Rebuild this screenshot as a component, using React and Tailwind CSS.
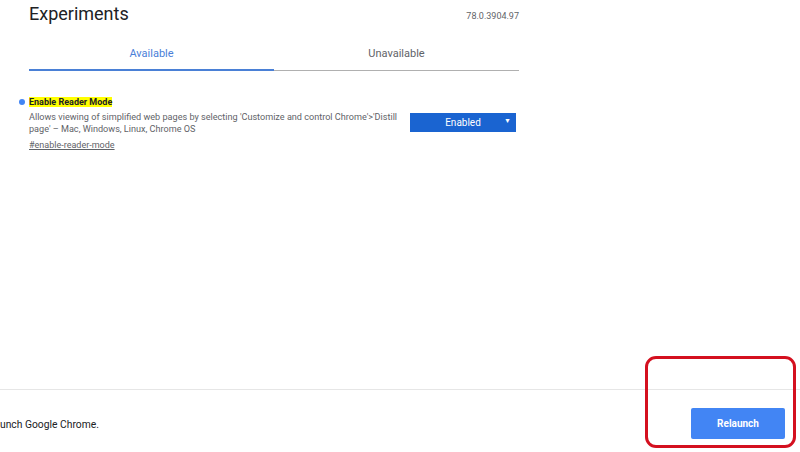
export default function App() {
  return (
    <div className="relative w-[800px] h-[452px] bg-white overflow-hidden" style={{ fontFamily: "Roboto, 'Liberation Sans', sans-serif" }}>
      <div className="flex flex-col h-full">
        <div className="flex-1">
          <div className="ml-[29px] w-[490px]">
            <div className="flex items-end justify-between h-[25px]">
              <h1 className="text-[18px] leading-[22px] text-[#202124] font-normal">Experiments</h1>
              <span className="text-[9px] leading-[12px] text-[#5f6368] mb-[3px]">78.0.3904.97</span>
            </div>
            <div className="flex mt-[20px]">
              <div className="flex-1 flex flex-col">
                <div className="h-[24px] pt-[2px] flex items-start justify-center text-[11px] leading-[14px] text-[#4a7ed8]">Available</div>
                <div className="h-[2px] bg-[#4a80d6]"></div>
              </div>
              <div className="flex-1 flex flex-col">
                <div className="h-[24px] pt-[2px] flex items-start justify-center text-[11px] leading-[14px] text-[#5f6368]">Unavailable</div>
                <div className="h-[1px] mt-[1px] bg-[#b0b0b0]"></div>
              </div>
            </div>
            <div className="mt-[25px] flex justify-between">
              <div className="relative">
                <span className="absolute left-[-10px] top-[3px] w-[6px] h-[6px] rounded-full bg-[#4285f4]"></span>
                <div className="text-[9px] leading-[12px] font-bold text-[#202124]"><span className="bg-[#ffff00]">Enable Reader Mode</span></div>
                <p className="mt-[3px] w-[380px] text-[9.1px] leading-[12px] text-[#5f6368]">Allows viewing of simplified web pages by selecting 'Customize and control Chrome'&gt;'Distill page' – Mac, Windows, Linux, Chrome OS</p>
                <a className="block mt-[4px] text-[9px] leading-[12px] text-[#5f6368] underline">#enable-reader-mode</a>
              </div>
              <div className="mt-[17px] mr-[3px] w-[106px] h-[19px] bg-[#1a64d1] flex items-center relative">
                <span className="flex-1 text-center text-[10px] text-white">Enabled</span>
                <span className="absolute right-[5px] top-[3px] text-[7px] text-white">▼</span>
              </div>
            </div>
          </div>
        </div>
        <div className="h-[63px] pt-[5px] border-t border-[#e6e6e6] flex items-center justify-between">
          <span className="mt-[3px] text-[10.3px] text-[#202124] whitespace-nowrap">unch Google Chrome.</span>
          <button className="mr-[15px] w-[94px] h-[31px] rounded-[2px] bg-[#4285f4] text-white text-[10px] font-bold">Relaunch</button>
        </div>
      </div>
      <div className="absolute left-[645px] top-[356px] w-[151px] h-[92px] border-[3px] border-[#d4101f] rounded-[11px]"></div>
    </div>
  );
}
